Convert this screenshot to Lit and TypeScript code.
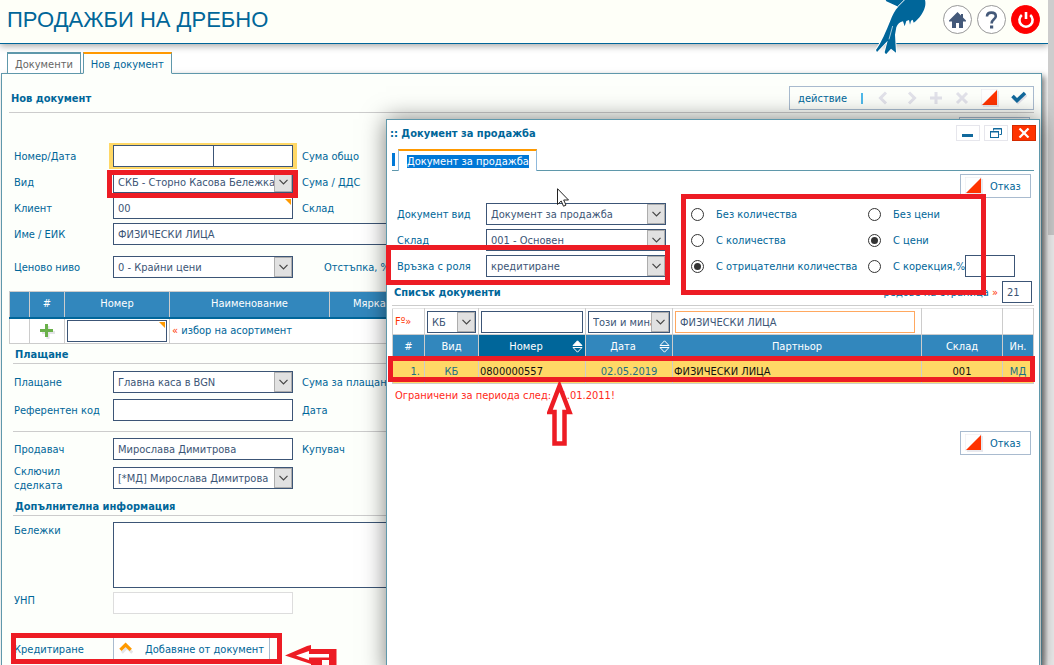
import { LitElement, html, css, svg, nothing } from 'lit';
import { customElement, property } from 'lit/decorators.js';
import { classMap } from 'lit/directives/class-map.js';

const base = css`
  :host {
    font-family: 'DejaVu Sans Condensed', 'DejaVu Sans', sans-serif;
    font-size: 11px;
    line-height: 14px;
    color: #006699;
  }
  *,
  *::before {
    box-sizing: border-box;
  }
  button,
  input,
  select,
  textarea {
    font: inherit;
    margin: 0;
    border-radius: 0;
  }
  input,
  textarea {
    display: block;
    width: 100%;
    height: 22px;
    padding: 1px 4px 0;
    border: 1px solid #3c5576;
    background: #fff;
    color: #3c5576;
    outline: none;
  }
  h1,
  h2,
  h3 {
    margin: 0;
    font-size: 11px;
    line-height: 14px;
  }
  svg {
    display: block;
  }
`;

/* Small red and white square used on every cancel control. */
const cancelIcon = svg`<svg width="18" height="18" viewBox="0 0 18 18" aria-hidden="true">
  <rect x="2" y="2" width="16" height="16" fill="#e9e9ee"></rect>
  <rect x="0" y="0" width="16" height="16" fill="#fff" stroke="#e9e9ee"></rect>
  <path d="M1 16 16 1V16Z" fill="#ff3300"></path>
</svg>`;

@customElement('drop-down')
class DropDown extends LitElement {
  @property() value = '';
  @property() label = '';

  static styles = [
    base,
    css`
      :host {
        display: block;
      }
      .box {
        display: grid;
        grid-template-columns: minmax(0, 1fr) 18px;
        height: 22px;
        border: 1px solid #3c5576;
        background: #fff;
      }
      .list {
        grid-area: 1 / 1 / 2 / 3;
        appearance: none;
        width: 100%;
        height: 20px;
        padding: 2px 16px 0 4px;
        border: 0;
        background: none;
        color: #3c5576;
        outline: none;
        text-overflow: clip;
      }
      .arrow {
        grid-area: 1 / 2;
        display: grid;
        place-items: center;
        border: 1px solid #adadad;
        background: #e1e1e1;
        pointer-events: none;
      }
    `,
  ];

  render() {
    return html`<div class="box">
      <select class="list" aria-label=${this.label}>
        <option>${this.value}</option>
      </select>
      <span class="arrow">
        <svg width="9" height="6" viewBox="0 0 9 6"><path d="M.5.8 4.5 4.8 8.5.8" fill="none" stroke="#444" stroke-width="1.2"></path></svg>
      </span>
    </div>`;
  }
}

@customElement('cancel-button')
class CancelButton extends LitElement {
  static styles = [
    base,
    css`
      :host {
        display: block;
      }
      .button {
        display: flex;
        align-items: center;
        gap: 7px;
        width: 71px;
        height: 24px;
        padding: 0 4px;
        border: 1px solid #a9bbcf;
        background: #fff;
        color: #006699;
      }
      .text {
        padding-top: 2px;
      }
    `,
  ];

  render() {
    return html`<button class="button">${cancelIcon}<span class="text">Отказ</span></button>`;
  }
}

@customElement('page-header')
class PageHeader extends LitElement {
  static styles = [
    base,
    css`
      :host {
        display: block;
      }
      .bar {
        display: flex;
        align-items: flex-start;
        justify-content: space-between;
        height: 44px;
        padding: 5px 8px 0 7px;
        border-bottom: 1px solid #00669a;
        background: #fefff8;
        box-shadow: 0 2px 7px rgba(0, 0, 0, 0.35);
      }
      .title {
        font: 400 22px/30px 'Liberation Sans', Arial, sans-serif;
      }
      .side {
        display: flex;
        gap: 5px;
      }
      .bird {
        margin: -5px 5px 0 0;
      }
      .round {
        display: grid;
        place-items: center;
        width: 29px;
        height: 29px;
        padding: 0;
        border: 1px solid #999;
        border-radius: 50%;
        background: #fff;
      }
      .power {
        border-color: #f00;
        background: #f00;
      }
    `,
  ];

  render() {
    return html`<header class="bar">
      <h1 class="title">ПРОДАЖБИ НА ДРЕБНО</h1>
      <div class="side">
        <svg class="bird" width="64" height="56" viewBox="0 0 192 168" aria-hidden="true">
          <path
            d="M50 0H168C172 14 166 32 157 44C150 54 142 62 134 68L131 59L126 62L123 74L120 60L112 63L107 79L102 64C92 66 86 72 82 82L78 104L81 158L66 146L51 163L47 157L56 122L24 156L21 150C38 126 51 94 64 62C70 46 78 30 88 20L52 4Z"
            fill="#00669a"
            stroke="#fff"
            stroke-width="5"
            paint-order="stroke"
          ></path>
          <path d="M60 118 71 78" stroke="#fff" stroke-width="2"></path>
          <path d="M86 20 108 -2" stroke="#fff" stroke-width="3"></path>
        </svg>
        <button class="round" aria-label="Начало">
          <svg width="17" height="16" viewBox="0 0 17 16"><path d="M8.5 0 0 8.5V9.5H3V16H7V11H10V16H14V9.5H17V8.5L14 5.5V2H12V3.5Z" fill="#44597a"></path></svg>
        </button>
        <button class="round" aria-label="Помощ">
          <svg width="13" height="18" viewBox="0 0 13 18">
            <path d="M2 5.5C2 3 3.8 1.6 6.4 1.6C9 1.6 10.8 3 10.8 5.2C10.8 8.4 6.6 8.2 6.6 12.5" fill="none" stroke="#44597a" stroke-width="2.6"></path>
            <rect x="5" y="14.5" width="3.2" height="3" fill="#44597a"></rect>
          </svg>
        </button>
        <button class="round power" aria-label="Изход">
          <svg width="18" height="18" viewBox="0 0 18 18" fill="none" stroke="#fff">
            <path d="M4.8 4A6.6 6.6 0 1 0 13.2 4" stroke-width="2.6"></path>
            <path d="M9 1V8" stroke-width="2.6"></path>
          </svg>
        </button>
      </div>
    </header>`;
  }
}

@customElement('document-form')
class DocumentForm extends LitElement {
  static styles = [
    base,
    css`
      :host {
        display: block;
      }
      .tabs {
        display: flex;
        gap: 2px;
        margin: 8px 0 -1px;
        padding-left: 7px;
      }
      .tab {
        position: relative;
        height: 22px;
        padding: 3px 7px 0;
        border: 1px solid #5f98ab;
        border-top: 2px solid #5f98ab;
        background: #fff;
        color: #666;
        text-decoration: none;
        line-height: 15px;
      }
      .tab.on {
        border-top-color: #ff9900;
        border-bottom-color: #fdfffb;
        background: #fdfffb;
        color: #006699;
      }
      .panel {
        min-height: 640px;
        margin: 0 6px 0 1px;
        border: 1px solid #5f98ab;
        background: #fdfffb;
        box-shadow: 3px 3px 6px rgba(0, 0, 0, 0.5);
      }
      .top {
        display: flex;
        align-items: center;
        justify-content: space-between;
        height: 39px;
        margin: 0 7px;
        padding: 11px 0 1px 2px;
        border-bottom: 1px solid #ccc;
      }
      .top h2 {
        padding-top: 2px;
      }
      .tools {
        display: flex;
        align-items: center;
        gap: 14px;
        height: 24px;
        padding: 0 6px 0 8px;
        border: 1px solid #a9bbcf;
        background: #fdfffb;
      }
      .tool {
        padding: 0;
        border: 0;
        background: none;
        color: #006699;
      }
      .tool.word {
        padding-top: 2px;
      }
      .tool.icon {
        margin-right: -2px;
      }
      .split {
        width: 2px;
        height: 11px;
        background: #4fb9ea;
      }
      .peek {
        display: flex;
        justify-content: flex-end;
        height: 24px;
        padding: 4px 11px 0;
      }
      .grid {
        display: grid;
        grid-template-columns: 99px 180px 1fr;
        grid-auto-rows: 22px;
        row-gap: 4px;
        align-items: center;
        padding-left: 12px;
      }
      .grid > span,
      .grid > label {
        padding-top: 2px;
      }
      .head {
        padding-top: 8px;
      }
      .level {
        padding-top: 11px;
      }
      .after {
        padding-left: 9px;
      }
      .far {
        padding-left: 31px;
      }
      .wide {
        grid-column: 2 / 4;
        width: auto;
        margin-right: 14px;
      }
      .pair {
        display: grid;
        grid-template-columns: 101px 80px;
        width: 188px;
        margin: 0 -4px;
        padding: 2px 4px;
        background: #ffd866;
      }
      .pair .second {
        margin-left: -1px;
      }
      .marked {
        display: grid;
        position: relative;
      }
      .marked::before {
        content: '';
        position: absolute;
        top: 2px;
        right: 2px;
        border: 3px solid transparent;
        border-top-color: #ff9900;
        border-right-color: #ff9900;
      }
      .items {
        table-layout: fixed;
        width: calc(100% - 14px);
        margin: 13px 7px 0;
        border-collapse: collapse;
      }
      .items th {
        height: 26px;
        padding: 0;
        border: 1px solid #ccc;
        border-bottom: 2px solid #00669a;
        background: #3287bd;
        color: #fff;
        font-weight: 400;
      }
      .items td {
        height: 25px;
        padding: 1px 2px;
        border: 1px solid #ccc;
        background: #fff;
      }
      .c1 {
        width: 20px;
      }
      .c2 {
        width: 35px;
      }
      .c3 {
        width: 105px;
      }
      .c4 {
        width: 160px;
      }
      .c5 {
        width: 80px;
      }
      .plus {
        margin: 0 auto;
      }
      .pick {
        color: #006699;
        text-decoration: none;
      }
      .mark {
        color: #ff3300;
      }
      .section {
        height: 20px;
        margin: 0 7px 0 11px;
        padding: 4px 0 0 2px;
        border-bottom: 1px solid #ccc;
      }
      .pay {
        padding-top: 7px;
        row-gap: 6px;
        padding-bottom: 10px;
      }
      .people {
        margin: 0 7px 0 11px;
        padding: 6px 0 7px 1px;
        border-top: 1px solid #ccc;
        row-gap: 7px;
      }
      .extra {
        grid-auto-rows: auto;
        padding-top: 6px;
        align-items: start;
      }
      .notes {
        height: 66px;
        resize: none;
      }
      .dim {
        border-color: #ddd;
      }
      .credit {
        padding-top: 23px;
        grid-auto-rows: 24px;
      }
      .add {
        display: flex;
        align-items: center;
        gap: 11px;
        width: 157px;
        height: 24px;
        padding: 0 5px;
        border: 1px solid #a9bbcf;
        background: #fff;
        color: #006699;
        white-space: nowrap;
      }
      .add span {
        padding-top: 2px;
      }
    `,
  ];

  render() {
    return html`
      <nav class="tabs">
        <a class="tab" href="#docs">Документи</a>
        <a class="tab on" href="#new">Нов документ</a>
      </nav>
      <section class="panel">
        <div class="top">
          <h2>Нов документ</h2>
          <div class="tools">
            <button class="tool word">действие</button>
            <span class="split"></span>
            <button class="tool icon" aria-label="Предишен"><svg width="14" height="14" viewBox="0 0 14 14"><path d="M9 1.5 3.5 7 9 12.5" fill="none" stroke="#e2e2ea" stroke-width="3"></path></svg></button>
            <button class="tool icon" aria-label="Следващ"><svg width="14" height="14" viewBox="0 0 14 14"><path d="M6 1.5 11.5 7 6 12.5" fill="none" stroke="#e2e2ea" stroke-width="3"></path></svg></button>
            <button class="tool icon" aria-label="Добавяне"><svg width="14" height="14" viewBox="0 0 14 14"><path d="M7 1V13M1 7H13" stroke="#e2e2ea" stroke-width="3"></path></svg></button>
            <button class="tool icon" aria-label="Изтриване"><svg width="14" height="14" viewBox="0 0 14 14"><path d="M2 2 12 12M12 2 2 12" stroke="#e2e2ea" stroke-width="3"></path></svg></button>
            <button class="tool icon" aria-label="Отказ">${cancelIcon}</button>
            <button class="tool" aria-label="Запис"><svg width="16" height="14" viewBox="0 0 16 14"><path d="M2 7 7 11.5 15.5 4" fill="none" stroke="#e2e2ea" stroke-width="3"></path><path d="M1.5 5 6 9.5 14 2" fill="none" stroke="#11699c" stroke-width="3.6"></path></svg></button>
          </div>
        </div>
        <div class="peek"><cancel-button></cancel-button></div>

        <div class="grid head">
          <label for="num">Номер/Дата</label>
          <div class="pair"><input id="num" /><input class="second" aria-label="Дата" /></div>
          <span class="after">Сума общо</span>
          <span>Вид</span>
          <drop-down label="Вид" value="СКБ - Сторно Касова Бележка"></drop-down>
          <span class="after">Сума / ДДС</span>
          <label for="client">Клиент</label>
          <div class="marked"><input id="client" .value=${'00'} /></div>
          <span class="after">Склад</span>
          <label for="name">Име / ЕИК</label>
          <input class="wide" id="name" .value=${'ФИЗИЧЕСКИ ЛИЦА'} />
        </div>
        <div class="grid level">
          <span>Ценово ниво</span>
          <drop-down label="Ценово ниво" value="0 - Крайни цени"></drop-down>
          <span class="far">Отстъпка, %</span>
        </div>

        <table class="items">
          <colgroup>
            <col class="c1" /><col class="c2" /><col class="c3" /><col class="c4" /><col class="c5" /><col />
          </colgroup>
          <thead>
            <tr><th></th><th>#</th><th>Номер</th><th>Наименование</th><th>Мярка</th><th></th></tr>
          </thead>
          <tbody>
            <tr>
              <td></td>
              <td>
                <svg class="plus" width="16" height="16" viewBox="0 0 16 16"><path d="M9 3V16M3 9.5H16" stroke="#e4e4e8" stroke-width="3"></path><path d="M7.5 1V14M1 7.5H14" stroke="#6ab04a" stroke-width="3"></path></svg>
              </td>
              <td><div class="marked"><input aria-label="Номер" /></div></td>
              <td colspan="3"><a class="pick" href="#items"><span class="mark">«</span> избор на асортимент</a></td>
            </tr>
          </tbody>
        </table>

        <h3 class="section">Плащане</h3>
        <div class="grid pay">
          <span>Плащане</span>
          <drop-down label="Плащане" value="Главна каса в BGN"></drop-down>
          <span class="after">Сума за плащане</span>
          <label for="ref">Референтен код</label>
          <input id="ref" />
          <span class="after">Дата</span>
        </div>
        <div class="grid people">
          <label for="seller">Продавач</label>
          <input id="seller" .value=${'Мирослава Димитрова'} />
          <span class="after">Купувач</span>
          <span>Сключил<br />сделката</span>
          <drop-down label="Сключил сделката" value="[*МД] Мирослава Димитрова"></drop-down>
        </div>

        <h3 class="section">Допълнителна информация</h3>
        <div class="grid extra">
          <label for="notes">Бележки</label>
          <textarea class="wide notes" id="notes"></textarea>
          <label for="unp">УНП</label>
          <input class="dim" id="unp" />
        </div>
        <div class="grid credit">
          <span>Кредитиране</span>
          <button class="add">
            <svg width="16" height="14" viewBox="0 0 16 14"><path d="M3 11 8.500 5.500 14 11" fill="none" stroke="#e4e4e8" stroke-width="3"></path><path d="M1.500 8 7 2.500 12.500 8" fill="none" stroke="#ff9900" stroke-width="3.400"></path></svg>
            <span>Добавяне от документ</span>
          </button>
        </div>
      </section>
    `;
  }
}

interface Option {
  text: string;
  group: string;
  on?: boolean;
}

const OPTIONS: Option[] = [
  { text: 'Без количества', group: 'qty' },
  { text: 'Без цени', group: 'price' },
  { text: 'С количества', group: 'qty' },
  { text: 'С цени', group: 'price', on: true },
  { text: 'С отрицателни количества', group: 'qty', on: true },
  { text: 'С корекция,%', group: 'price' },
];

@customElement('sale-dialog')
class SaleDialog extends LitElement {
  static styles = [
    base,
    css`
      :host {
        display: block;
        border: 1px solid #5f98ab;
        background: #fff;
        box-shadow: 0 0 22px rgba(0, 0, 0, 0.5);
      }
      .caption {
        display: flex;
        align-items: flex-start;
        justify-content: space-between;
        padding: 5px 3px 0 3px;
      }
      .caption h2 {
        padding-top: 2px;
      }
      .window {
        display: flex;
        gap: 4px;
      }
      .win {
        display: grid;
        place-items: center;
        width: 24px;
        height: 16px;
        padding: 0;
        border: 1px solid #e6e6ec;
        background: #fff;
      }
      .close {
        border-color: #d42a00;
        background: #ff3300;
      }
      .tabs {
        display: flex;
        margin: 8px 5px 0;
        border-bottom: 1px solid #5f98ab;
      }
      .chosen {
        width: 3px;
        height: 13px;
        margin: 4px 3px 0 0;
        background: #0078d7;
      }
      .tab {
        height: 22px;
        margin-bottom: -1px;
        padding: 4px 7px 0 8px;
        border: 1px solid #8fb9dc;
        border-top: 2px solid #ff9900;
        border-bottom: 0;
        background: #fff;
        color: #fff;
        text-decoration: none;
      }
      .tab span {
        background: #0078d7;
      }
      .right {
        display: flex;
        justify-content: flex-end;
        padding: 3px 8px 0;
      }
      .filters {
        display: grid;
        grid-template-columns: 269px 1fr;
        column-gap: 25px;
        padding: 5px 8px 0 10px;
      }
      .fields {
        display: grid;
        grid-template-columns: 89px 180px;
        grid-auto-rows: 22px;
        row-gap: 4px;
        align-items: center;
      }
      .fields > span {
        padding-top: 2px;
      }
      .radios {
        display: grid;
        grid-template-columns: 177px 1fr;
        grid-auto-rows: 22px;
        row-gap: 4px;
        align-items: center;
      }
      .option {
        display: flex;
        align-items: center;
      }
      .option label {
        padding: 2px 0 0 12px;
      }
      .option .percent {
        width: 50px;
      }
      .radio {
        appearance: none;
        display: grid;
        place-items: center;
        flex: none;
        width: 13px;
        height: 13px;
        padding: 0;
        border: 1px solid #333;
        border-radius: 50%;
      }
      .radio:checked::before {
        content: '';
        width: 7px;
        height: 7px;
        border-radius: 50%;
        background: #333;
      }
      .listhead {
        display: flex;
        align-items: center;
        height: 25px;
        margin: 4px 5px 2px;
        padding: 0 2px 2px;
        border-bottom: 1px solid #ccc;
      }
      .listhead h3,
      .listhead label {
        padding-top: 2px;
      }
      .listhead label {
        margin-left: auto;
        padding-right: 4px;
      }
      .listhead .rows {
        width: 30px;
      }
      .mark {
        color: #ff3300;
      }
      .docs {
        table-layout: fixed;
        width: calc(100% - 10px);
        margin: 0 5px;
        border-collapse: collapse;
      }
      .docs td,
      .docs th {
        padding: 0 1px;
        border: 1px solid #ccc;
        font-weight: 400;
      }
      .docs .find td {
        height: 26px;
        padding: 1px 2px;
        border-top-color: #e6e6e6;
      }
      .docs th {
        height: 23px;
        padding-top: 1px;
        border-top-color: #3287bd;
        border-bottom: 0;
        background: #3287bd;
        color: #fff;
      }
      .docs th.sorted {
        background: #00669a;
      }
      .sort {
        display: flex;
        align-items: center;
        justify-content: flex-end;
        padding-right: 1px;
      }
      .sort span {
        flex: 1;
      }
      .docs .hit td {
        height: 26px;
        padding: 3px 1px 0;
        background: #ffd866;
        color: #111;
        text-align: center;
      }
      .docs .hit .start {
        text-align: left;
      }
      .docs .hit .link {
        color: #1b6f87;
      }
      .docs .hit .nr {
        padding-right: 4px;
        text-align: right;
      }
      .partner {
        width: 240px;
        border-color: #ffa860;
      }
      .d1 {
        width: 32px;
      }
      .d2 {
        width: 54px;
      }
      .d3 {
        width: 107px;
      }
      .d4 {
        width: 87px;
      }
      .d6 {
        width: 81px;
      }
      .d7 {
        width: 31px;
      }
      .note {
        margin: 0;
        padding: 5px 8px 25px;
        color: #ff2a1a;
      }
    `,
  ];

  private sorter(up: boolean) {
    return svg`<svg width="11" height="13" viewBox="0 0 11 13" stroke="#fff" fill="none">
      <path d="M5.5 .8 10 5.5H1Z" fill=${up ? '#fff' : 'none'}></path>
      <path d="M1 7.5H10L5.5 12.2Z"></path>
    </svg>`;
  }

  render() {
    return html`
      <div class="caption">
        <h2>:: Документ за продажба</h2>
        <div class="window">
          <button class="win" aria-label="Минимизиране"><svg width="12" height="10" viewBox="0 0 12 10"><rect y="6" width="11" height="3" fill="#11699c"></rect></svg></button>
          <button class="win" aria-label="Възстановяване"><svg width="12" height="10" viewBox="0 0 12 10" fill="none" stroke="#11699c"><path d="M3.5 2.5V.5H11.5V6.5H9.5M3 1H12"></path><rect x=".5" y="3.5" width="8" height="6" fill="#fff"></rect><path d="M0 4H9"></path></svg></button>
          <button class="win close" aria-label="Затваряне"><svg width="12" height="10" viewBox="0 0 12 10"><path d="M1.5 .5 10.5 9.5M10.5 .5 1.5 9.5" stroke="#fff" stroke-width="2.2"></path></svg></button>
        </div>
      </div>
      <nav class="tabs">
        <span class="chosen"></span>
        <a class="tab" href="#sale"><span>Документ за продажба</span></a>
      </nav>
      <div class="right"><cancel-button></cancel-button></div>

      <div class="filters">
        <div class="fields">
          <span>Документ вид</span>
          <drop-down label="Документ вид" value="Документ за продажба"></drop-down>
          <span>Склад</span>
          <drop-down label="Склад" value="001 - Основен"></drop-down>
          <span>Връзка с роля</span>
          <drop-down label="Връзка с роля" value="кредитиране"></drop-down>
        </div>
        <div class="radios">
          ${OPTIONS.map(
            (o, i) => html`<div class="option">
              <input class="radio" type="radio" id="o${i}" name=${o.group} ?checked=${!!o.on} />
              <label for="o${i}">${o.text}</label>
              ${i === 5 ? html`<input class="percent" aria-label="Корекция" />` : nothing}
            </div>`,
          )}
        </div>
      </div>

      <div class="listhead">
        <h3>Списък документи</h3>
        <label for="rows">редове на страница <span class="mark">»</span></label>
        <input class="rows" id="rows" .value=${'21'} />
      </div>
      <table class="docs">
        <colgroup>
          <col class="d1" /><col class="d2" /><col class="d3" /><col class="d4" /><col /><col class="d6" /><col class="d7" />
        </colgroup>
        <thead>
          <tr class="find">
            <td><span class="mark">Fº»</span></td>
            <td><drop-down label="Вид" value="КБ"></drop-down></td>
            <td><input aria-label="Номер" /></td>
            <td><drop-down label="Дата" value="Този и минал месец"></drop-down></td>
            <td><input class="partner" aria-label="Партньор" .value=${'ФИЗИЧЕСКИ ЛИЦА'} /></td>
            <td></td>
            <td></td>
          </tr>
          <tr>
            <th>#</th>
            <th>Вид</th>
            <th class=${classMap({ sorted: true })}><div class="sort"><span>Номер</span>${this.sorter(true)}</div></th>
            <th><div class="sort"><span>Дата</span>${this.sorter(false)}</div></th>
            <th>Партньор</th>
            <th>Склад</th>
            <th>Ин.</th>
          </tr>
        </thead>
        <tbody>
          <tr class="hit">
            <td class="nr link">1.</td>
            <td class="link">КБ</td>
            <td class="start">0800000557</td>
            <td class="link">02.05.2019</td>
            <td class="start">ФИЗИЧЕСКИ ЛИЦА</td>
            <td>001</td>
            <td class="link">МД</td>
          </tr>
        </tbody>
      </table>
      <p class="note">Ограничени за периода след: 01.01.2011!</p>
      <div class="right"><cancel-button></cancel-button></div>
    `;
  }
}

@customElement('app-root')
class AppRoot extends LitElement {
  static styles = [
    base,
    css`
      :host {
        display: block;
        position: relative;
        height: 100vh;
        overflow: hidden;
        background: #fff;
      }
      .screen {
        display: grid;
        grid-template-columns: minmax(0, 1fr) 6px;
        height: 100%;
      }
      .page {
        overflow: hidden;
      }
      .rail {
        background: #f0f0f0;
      }
      .thumb {
        height: 235px;
        background: #cdcdcd;
      }
      .dialog {
        position: absolute;
        top: 119px;
        right: 14px;
        bottom: -10px;
        left: 386px;
      }
      .frame,
      .pointer {
        position: absolute;
        pointer-events: none;
      }
      .frame {
        border: 5px solid #ed1c24;
      }
      .kind {
        left: 107px;
        top: 170px;
        width: 191px;
        height: 28px;
      }
      .source {
        left: 11px;
        top: 633px;
        width: 271px;
        height: 31px;
      }
      .role {
        left: 386px;
        top: 245px;
        width: 284px;
        height: 40px;
      }
      .choices {
        left: 681px;
        top: 194px;
        width: 305px;
        height: 101px;
      }
      .row {
        left: 388px;
        top: 356px;
        width: 647px;
        height: 26px;
      }
      .up {
        left: 547px;
        top: 381px;
      }
      .back {
        left: 285px;
        top: 645px;
      }
      .mouse {
        left: 557px;
        top: 188px;
      }
    `,
  ];

  render() {
    return html`
      <div class="screen">
        <div class="page">
          <page-header></page-header>
          <document-form></document-form>
        </div>
        <div class="rail"><div class="thumb"></div></div>
      </div>
      <sale-dialog class="dialog"></sale-dialog>

      <div class="frame kind"></div>
      <div class="frame source"></div>
      <div class="frame role"></div>
      <div class="frame choices"></div>
      <div class="frame row"></div>
      <svg class="pointer up" width="26" height="66" viewBox="0 0 26 66">
        <path d="M12.5 5 22.5 31H17.500V62.500H7.500V31H2.500Z" fill="#fff" stroke="#ed1c24" stroke-width="4.500"></path>
      </svg>
      <svg class="pointer back" width="52" height="20" viewBox="0 0 52 20">
        <path d="M0 10.500 22 1 26 0V4H51.500V20H44V15H37V20H26V19Z" fill="#ed1c24"></path>
        <path d="M11 10.500 24 6V9H44V12.500H24V15Z" fill="#fff"></path>
      </svg>
      <svg class="pointer mouse" width="12" height="19" viewBox="0 0 12 19">
        <path d="M.5 .7V16.500L4.200 13 6.500 18.200 9 17.100 6.700 12H11.500Z" fill="#fff" stroke="#222"></path>
      </svg>
    `;
  }
}
